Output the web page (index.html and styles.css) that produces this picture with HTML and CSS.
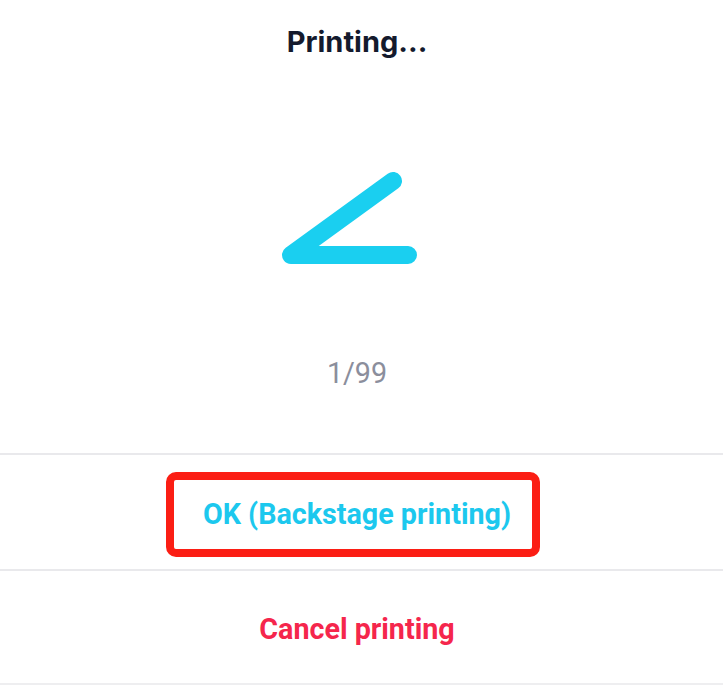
FILE: index.html
```html
<!DOCTYPE html>
<html>
<head>
<meta charset="utf-8">
<link rel="stylesheet" href="styles.css">
</head>
<body>
<div class="dialog">
  <div class="head">
    <h1 class="title">Printing...</h1>
    <div class="spinner">
      <svg width="160" height="110" viewBox="0 0 160 110">
        <path d="M122 21 L20 95 L137 95" fill="none" stroke="#1acff0" stroke-width="18" stroke-linecap="round" stroke-linejoin="round"/>
      </svg>
    </div>
    <div class="count">1/99</div>
  </div>
  <div class="row ok">
    <span class="mark">OK (Backstage printing)</span>
  </div>
  <div class="row cancel">Cancel printing</div>
</div>
</body>
</html>
```

FILE: styles.css
```css
html, body {
  margin: 0;
  padding: 0;
  background: #ffffff;
}
.dialog {
  width: 723px;
  height: 685px;
  display: flex;
  flex-direction: column;
  font-family: Roboto, "Liberation Sans", sans-serif;
}
.head {
  height: 455px;
  flex: none;
  box-sizing: border-box;
  padding-right: 9px;
  display: flex;
  flex-direction: column;
  align-items: center;
  border-bottom: 2px solid #e9e9ec;
}
.title {
  margin: 22px 0 0;
  font-family: Inter, "Noto Sans", sans-serif;
  font-weight: 700;
  font-size: 29px;
  line-height: 40px;
  color: #141a2d;
}
.spinner {
  margin-top: 98px;
  margin-left: -12px;
  height: 110px;
}
.spinner svg {
  display: block;
}
.count {
  margin-top: 86px;
  font-size: 28.7px;
  line-height: 34px;
  color: #8b8e9c;
}
.row {
  flex: none;
  box-sizing: border-box;
  padding-right: 9px;
  display: flex;
  align-items: center;
  justify-content: center;
  font-weight: 700;
  font-size: 28.7px;
}
.ok {
  height: 116px;
  border-bottom: 2px solid #e9e9ec;
  color: #1cc8ee;
}
.mark {
  display: block;
  box-sizing: border-box;
  width: 374px;
  height: 85px;
  line-height: 69px;
  text-align: center;
  padding-left: 8px;
  border: 8px solid #fb1e14;
  border-radius: 10px;
  margin: 4px 8px 0 0;
}
.cancel {
  height: 114px;
  padding-top: 4px;
  border-bottom: 2px solid #eeeef0;
  color: #f5264c;
}
```
